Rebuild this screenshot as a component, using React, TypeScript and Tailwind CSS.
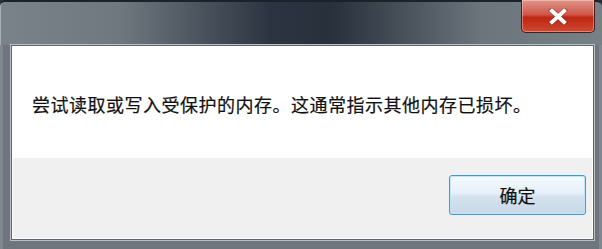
export default function App() {
  return (
    <div className="w-[602px] h-[249px] overflow-hidden bg-[#2a3038]">
      <div className="flex h-full flex-col rounded-t-[6px] border-t-[2px] border-[#1c2229] bg-[linear-gradient(to_right,#7a828a,#6f777f_20%,#2b3440_45%,#27303b_55%,#6c747c_80%,#777f87)] shadow-[inset_1px_0_0_#a9b0b7]">
        {/* title bar */}
        <div className="flex h-[43px] shrink-0 justify-end pr-[7px]">
          <button className="-mt-[2px] flex h-[33px] w-[74px] items-center justify-center rounded-b-[5px] border border-t-0 border-[#4a1d1a] bg-[linear-gradient(to_bottom,#e0958a,#d0584a_45%,#bd2512_55%,#d04a32)] shadow-[inset_0_0_0_1px_rgba(255,255,255,0.35)]">
            <svg width="20" height="17" viewBox="0 0 20 17">
              <path d="M3.5 2.5 L16.5 14.5 M16.5 2.5 L3.5 14.5" stroke="#5a1610" strokeWidth="5.5" strokeLinecap="square" opacity="0.3" />
              <path d="M4 3 L16 14 M16 3 L4 14" stroke="#ffffff" strokeWidth="4" strokeLinecap="square" />
            </svg>
          </button>
        </div>
        {/* client area */}
        <div className="flex flex-1 bg-[#6e757d] pl-[11px] pr-[8px] pb-[9px] shadow-[inset_3px_0_0_#7f878f,inset_-3px_0_0_#7f878f]">
          <div className="flex flex-1 flex-col border border-[#5d646b] bg-white p-[1px] shadow-[0_0_0_1px_#b9c0c6]">
            <div className="flex h-[111px] items-center pl-[19px] pt-[4px]">
              <p className="text-[18px] tracking-[0.5px] text-[#111111] font-['Microsoft_YaHei','Noto_Sans_CJK_SC',sans-serif] [-webkit-text-stroke:0.2px_#111111]">
                尝试读取或写入受保护的内存。这通常指示其他内存已损坏。
              </p>
            </div>
            <div className="flex flex-1 items-start justify-end bg-[#f0f0f0] pr-[6px] pt-[17px]">
              <button className="flex h-[40px] w-[137px] items-center justify-center rounded-[3px] border border-[#3c9bd6] bg-[linear-gradient(to_bottom,#f5fafe,#e6f0f8_45%,#d4e2ee_55%,#cad9e6)] text-[18px] text-[#111111] shadow-[inset_0_0_0_1px_#bfe6fb] font-['Microsoft_YaHei','Noto_Sans_CJK_SC',sans-serif] [-webkit-text-stroke:0.2px_#111111]">
                确定
              </button>
            </div>
          </div>
        </div>
      </div>
    </div>
  )
}
